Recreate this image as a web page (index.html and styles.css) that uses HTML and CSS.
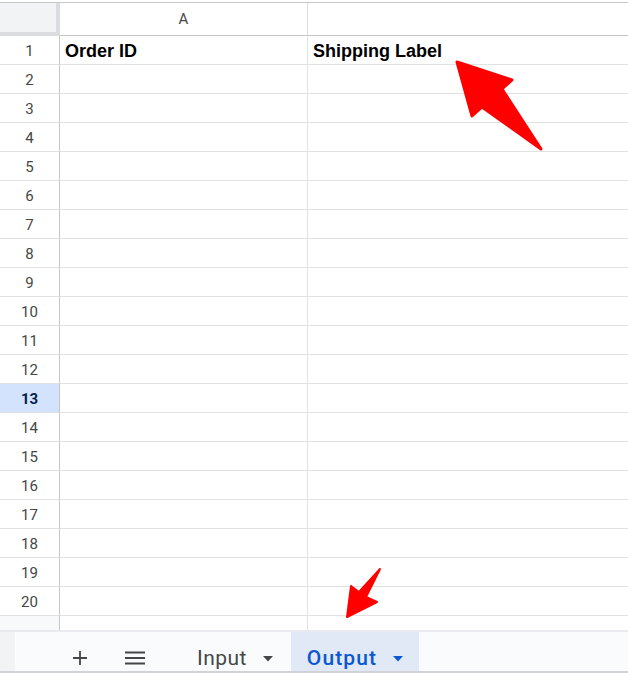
FILE: index.html
```html
<!DOCTYPE html>
<html>
<head>
<meta charset="utf-8">
<link rel="stylesheet" href="styles.css">
</head>
<body>
<div class="page">
  <div class="sheet">
    <div class="grid">
      <div class="corner"></div>
      <div class="colhead">A</div>
      <div class="colhead last"></div>

      <div class="rowhead">1</div><div class="cell bold">Order ID</div><div class="cell bold last">Shipping Label</div>
      <div class="rowhead">2</div><div class="cell"></div><div class="cell last"></div>
      <div class="rowhead">3</div><div class="cell"></div><div class="cell last"></div>
      <div class="rowhead">4</div><div class="cell"></div><div class="cell last"></div>
      <div class="rowhead">5</div><div class="cell"></div><div class="cell last"></div>
      <div class="rowhead">6</div><div class="cell"></div><div class="cell last"></div>
      <div class="rowhead">7</div><div class="cell"></div><div class="cell last"></div>
      <div class="rowhead">8</div><div class="cell"></div><div class="cell last"></div>
      <div class="rowhead">9</div><div class="cell"></div><div class="cell last"></div>
      <div class="rowhead">10</div><div class="cell"></div><div class="cell last"></div>
      <div class="rowhead">11</div><div class="cell"></div><div class="cell last"></div>
      <div class="rowhead">12</div><div class="cell"></div><div class="cell last"></div>
      <div class="rowhead selected">13</div><div class="cell"></div><div class="cell last"></div>
      <div class="rowhead">14</div><div class="cell"></div><div class="cell last"></div>
      <div class="rowhead">15</div><div class="cell"></div><div class="cell last"></div>
      <div class="rowhead">16</div><div class="cell"></div><div class="cell last"></div>
      <div class="rowhead">17</div><div class="cell"></div><div class="cell last"></div>
      <div class="rowhead">18</div><div class="cell"></div><div class="cell last"></div>
      <div class="rowhead">19</div><div class="cell"></div><div class="cell last"></div>
      <div class="rowhead">20</div><div class="cell"></div><div class="cell last"></div>

      <div class="rowhead tail"></div><div class="cell tail"></div><div class="cell tail last"></div>
    </div>
  </div>

  <div class="tabbar">
    <div class="edge"></div>
    <button class="iconbtn add" aria-label="Add sheet">
      <svg width="16" height="16" viewBox="0 0 16 16"><path d="M8 1v14M1 8h14" stroke="#444746" stroke-width="1.8" fill="none"/></svg>
    </button>
    <button class="iconbtn menu" aria-label="All sheets">
      <svg width="20" height="14" viewBox="0 0 20 14"><path d="M0 1.5h20M0 7h20M0 12.5h20" stroke="#444746" stroke-width="2" fill="none"/></svg>
    </button>
    <div class="tab first">
      <span class="tabname">Input</span>
      <svg class="caret" width="10" height="6" viewBox="0 0 10 6"><path d="M0 0h10L5 5.5z" fill="#444746"/></svg>
    </div>
    <div class="tab active">
      <span class="tabname">Output</span>
      <svg class="caret" width="10" height="6" viewBox="0 0 10 6"><path d="M0 0h10L5 5.5z" fill="#0b57d0"/></svg>
    </div>
  </div>

  <svg class="arrows" width="628" height="673" viewBox="0 0 628 673">
    <polygon points="457,62 512,80 502,89 541,149 482,107 472,116" fill="#ff0000" stroke="#ff0000" stroke-width="3" stroke-linejoin="round"/>
    <polygon points="380,569 366,597 377,602 347,617 351,586 359,592" fill="#ff0000" stroke="#ff0000" stroke-width="2" stroke-linejoin="round"/>
  </svg>
</div>
</body>
</html>
```

FILE: styles.css
```css
* { box-sizing: border-box; }

html, body {
  margin: 0;
  padding: 0;
  background: #ffffff;
}

.page {
  position: relative;
  width: 628px;
  height: 673px;
  overflow: hidden;
  font-family: "Liberation Sans", Arial, sans-serif;
}

.sheet {
  padding-top: 2px;
  height: 630px;
  overflow: hidden;
}

.grid {
  display: grid;
  grid-template-columns: 60px 248px 1fr;
  grid-template-rows: 33px repeat(20, 29px) 14px;
  border-top: 1px solid #c7c7c7;
}

.corner {
  background: #f1f3f4;
  border-right: 4px solid #dadcdf;
  border-bottom: 4px solid #dadcdf;
}

.colhead {
  display: flex;
  align-items: center;
  justify-content: center;
  font-family: Roboto, "Liberation Sans", sans-serif;
  font-size: 15px;
  color: #444746;
  border-right: 1px solid #dadcdf;
  border-bottom: 1px solid #c4c7c5;
  background: #ffffff;
}

.colhead.last {
  border-right: none;
}

.rowhead {
  display: flex;
  align-items: center;
  justify-content: center;
  padding-top: 1px;
  font-family: Roboto, "Liberation Sans", sans-serif;
  font-size: 15px;
  color: #444746;
  border-right: 1px solid #c4c7c5;
  border-bottom: 1px solid #e1e3e1;
  background: #ffffff;
}

.rowhead.selected {
  background: #d3e3fd;
  color: #041e49;
  font-weight: 700;
}

.cell {
  display: flex;
  align-items: center;
  padding: 3px 0 0 5px;
  font-size: 18px;
  color: #000000;
  border-right: 1px solid #e1e3e1;
  border-bottom: 1px solid #e1e3e1;
}

.cell.last {
  border-right: none;
}

.bold {
  font-weight: 700;
}

.rowhead.tail {
  background: #f8f9fa;
  border-bottom: none;
}

.cell.tail {
  border-bottom: none;
}

.tabbar {
  position: relative;
  height: 43px;
  display: flex;
  align-items: stretch;
  background: #f9fbfd;
  border-top: 2px solid #e8eaed;
  border-bottom: 2px solid #cfd2d6;
  font-family: Roboto, "Open Sans", sans-serif;
}

.edge {
  width: 15px;
  background: #f1f3f4;
  margin-right: 50px;
}

.iconbtn {
  width: 30px;
  padding: 12px 0 0 0;
  border: none;
  background: transparent;
  display: flex;
  align-items: center;
  justify-content: center;
}

.iconbtn.menu {
  margin-left: 25px;
}

.tab {
  display: flex;
  align-items: center;
  gap: 16px;
  padding: 12px 18px 0 16px;
  font-size: 21px;
  color: #444746;
}

.tab.first {
  margin-left: 31px;
}

.tab.first .tabname {
  letter-spacing: 0.45px;
}

.tab.active {
  background: #e1e9f7;
  color: #0b57d0;
  font-weight: 500;
  padding: 12px 16px 0 16px;
  width: 128px;
}

.tab.active .tabname {
  letter-spacing: 1.1px;
}

.caret {
  display: block;
  flex: none;
  margin-top: 2px;
}

.arrows {
  position: absolute;
  top: 0;
  left: 0;
  pointer-events: none;
}
```
